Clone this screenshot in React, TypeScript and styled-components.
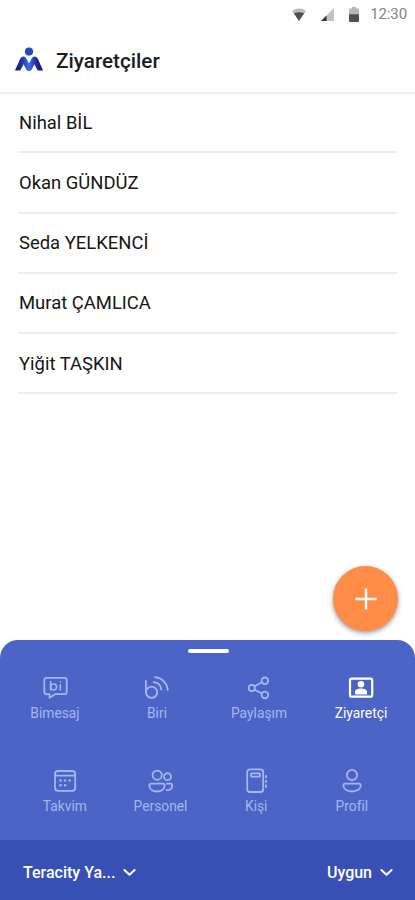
import React from "react";
import styled, { createGlobalStyle } from "styled-components";

const GlobalStyle = createGlobalStyle`
  *, *::before, *::after { box-sizing: border-box; }
  body { margin: 0; background: #fff; font-family: Roboto, "Liberation Sans", sans-serif; }
`;

const Screen = styled.div`
  display: flex;
  flex-direction: column;
  width: 415px;
  height: 900px;
  overflow: hidden;
  background: #fff;
`;

const StatusBar = styled.div`
  display: flex;
  flex: none;
  align-items: center;
  justify-content: flex-end;
  height: 28px;
  padding-right: 8px;
  color: #858585;
  font-size: 15px;
  letter-spacing: -0.1px;
  svg { display: block; flex: none; }
`;

const Clock = styled.span`
  margin-left: 11px;
  line-height: 28px;
`;

const StatusIcons = styled.div`
  display: flex;
  align-items: center;
  gap: 15px;
`;

const Header = styled.header`
  display: flex;
  flex: none;
  align-items: center;
  gap: 13px;
  height: 66px;
  padding-left: 15px;
  border-bottom: 2px solid #efefef;
  svg { display: block; flex: none; }
`;

const Title = styled.h1`
  margin: 2px 0 0;
  color: #1c1c1e;
  font-size: 20.7px;
  font-weight: 500;
  line-height: 24px;
`;

const List = styled.ul`
  flex: 1;
  margin: 0;
  padding: 0 18px;
  list-style: none;
`;

const Visitor = styled.li`
  display: flex;
  align-items: center;
  height: 60.2px;
  padding: 1px 0 0 1px;
  border-bottom: 2px solid #ededed;
  color: #161616;
  font-size: 18.45px;
  &:first-child { height: 59.4px; padding-top: 0; }
`;

const AddButton = styled.button`
  position: absolute;
  top: -74px;
  right: 17px;
  display: flex;
  align-items: center;
  justify-content: center;
  width: 65px;
  height: 65px;
  padding: 0;
  border: 0;
  border-radius: 50%;
  background: #ff8c47;
  box-shadow: 0 2px 5px rgba(0, 0, 0, 0.42);
`;

const Panel = styled.section`
  position: relative;
  display: flex;
  flex: none;
  flex-direction: column;
  height: 260px;
  border-radius: 18px 18px 0 0;
  background: #4c64c5;
`;

const Handle = styled.div`
  flex: none;
  width: 41px;
  height: 4px;
  margin: 9px auto 0 188px;
  border-radius: 2px;
  background: #fff;
`;

const NavRow = styled.nav<{ $columns: string; $left: number; $top: number }>`
  display: grid;
  grid-template-columns: ${(p) => p.$columns};
  margin-top: ${(p) => p.$top}px;
  padding-left: ${(p) => p.$left}px;
`;

const NavItem = styled.div<{ $active?: boolean }>`
  display: flex;
  flex-direction: column;
  align-items: center;
  height: 52px;
  color: ${(p) => (p.$active ? "#fff" : "#a5b6f0")};
  svg { display: block; flex: none; }
`;

const NavLabel = styled.span`
  margin-top: 2px;
  font-size: 13.8px;
  line-height: 18px;
  white-space: nowrap;
`;

const Footer = styled.footer`
  display: flex;
  align-items: center;
  justify-content: space-between;
  height: 60px;
  margin-top: auto;
  padding: 4px 22px 0 23px;
  background: #3850b5;
`;

const Picker = styled.div`
  display: flex;
  align-items: center;
  gap: 8px;
  color: #fff;
  font-size: 16px;
  font-weight: 500;
  svg { display: block; }
`;

const Svg = ({ children }: { children: React.ReactNode }) => (
  <svg width="28" height="28" viewBox="0 0 28 28" fill="none" stroke="currentColor" strokeWidth="1.8" strokeLinecap="round" strokeLinejoin="round">
    {children}
  </svg>
);

const MessageIcon = () => (
  <Svg>
    <path d="M5.5 3.8h18a2.2 2.2 0 0 1 2.2 2.2v12a2.2 2.2 0 0 1-2.2 2.2H14L8.6 23.8v-3.6H5.5A2.2 2.2 0 0 1 3.3 18V6a2.2 2.2 0 0 1 2.2-2.2z" />
    <path d="M9.6 7.5v8.3M19.3 10.8v5.2M19.3 7.7v.2" strokeWidth="1.6" />
    <circle cx="12.6" cy="13" r="3" strokeWidth="1.6" />
  </Svg>
);

const SignalIcon = () => (
  <Svg>
    <path d="M2.9 7v11.2M10.7 8.1c4.2.4 7.2 3.4 7.6 7.4M12.2 3.2c7 .9 11.9 6 12.6 12.8" />
    <circle cx="8.6" cy="18.3" r="5.6" />
  </Svg>
);

const ShareIcon = () => (
  <Svg>
    <path d="m9.6 12.2 7.4-4M9.6 15.7l7.4 3.8" />
    <circle cx="6.8" cy="14" r="3.1" />
    <circle cx="19.9" cy="6.8" r="3.3" />
    <circle cx="19.9" cy="21" r="3.3" />
  </Svg>
);

const VisitorIcon = () => (
  <Svg>
    <rect x="3" y="4.7" width="22.2" height="18" rx="1.8" strokeWidth="2.2" />
    <circle cx="14" cy="10.3" r="3.3" fill="currentColor" stroke="none" />
    <path d="M8 20.6v-2.8c0-2.3 2.9-3.4 6-3.4s6 1.1 6 3.4v2.8z" fill="currentColor" stroke="none" />
  </Svg>
);

const CalendarIcon = () => (
  <Svg>
    <rect x="4" y="4" width="20.2" height="19.8" rx="3" />
    <path d="M4.2 8.6h19.6" />
    <path d="M9.5 13.5h.1M14 13.5h.1M18.6 13.5h.1M9.5 18.3h.1M14 18.3h.1" strokeWidth="2.6" />
  </Svg>
);

const PeopleIcon = () => (
  <Svg>
    <circle cx="10.2" cy="8.2" r="4.6" />
    <circle cx="20.5" cy="9.7" r="3.5" />
    <path d="M4.2 16.7h11.6c1.1 0 1.8.7 1.8 1.8 0 3.8-3.2 6-7.5 6s-7.7-2.2-7.7-6c0-1.1.7-1.8 1.8-1.8zM19.8 16.7h3.7c1 0 1.7.7 1.7 1.7 0 3.1-2.2 4.8-5.7 4.8" />
  </Svg>
);

const ContactIcon = () => (
  <Svg>
    <rect x="5.2" y="2.4" width="16" height="22.6" rx="2.7" />
    <rect x="9" y="6.3" width="9" height="3.3" rx=".6" />
    <path d="M24 9v1.3M24 13.8v1.3M24 18.6v1.3" strokeWidth="2" />
  </Svg>
);

const ProfileIcon = () => (
  <Svg>
    <circle cx="14" cy="8" r="5.2" />
    <path d="M7.2 16.6h13.7c1.1 0 1.8.7 1.8 1.8 0 3.7-3.8 6.1-8.7 6.1s-8.6-2.4-8.6-6.1c0-1.1.7-1.8 1.8-1.8z" />
  </Svg>
);

const Chevron = () => (
  <svg width="13" height="9" viewBox="0 0 13 9" fill="none" stroke="currentColor" strokeWidth="2" strokeLinecap="round" strokeLinejoin="round">
    <path d="m1.4 2 5.1 4.8L11.6 2" />
  </svg>
);

const Logo = () => (
  <svg width="28" height="26" viewBox="0 0 28 26">
    <defs>
      <linearGradient id="logo" x1="0" x2="1">
        <stop offset="0" stopColor="#11116f" />
        <stop offset=".22" stopColor="#2033a8" />
        <stop offset=".5" stopColor="#416de0" />
        <stop offset=".76" stopColor="#202ba1" />
        <stop offset="1" stopColor="#11116f" />
      </linearGradient>
    </defs>
    <circle cx="14" cy="4.6" r="4.1" fill="#2548be" />
    <path d="M0 23.6 5.1 12.1Q6 9.4 8.2 9.4q2.4 0 3.3 2.4L14 16.6l2.5-4.8q1.1-2.4 3.3-2.4t3.2 2.7L28 23.6h-5.3l-3.3-6.4-2.8 5.6q-.8 1.4-2.6 1.4t-2.6-1.4l-2.8-5.6-3.3 6.4z" fill="url(#logo)" />
  </svg>
);

const WifiIcon = () => (
  <svg width="14" height="13" viewBox="0 0 14 13">
    <path d="M0 2.9Q7-2 14 2.9L7 13z" fill="#bbb" />
    <path d="M1.9 5.3Q7 3 12.1 5.3L7 13z" fill="#505050" />
  </svg>
);

const CellIcon = () => (
  <svg width="13" height="13" viewBox="0 0 14 14">
    <path d="M0 14 14 0v14z" fill="#c2c2c2" />
    <path d="M0 14 6 8v6z" fill="#333" />
  </svg>
);

const BatteryIcon = () => (
  <svg width="10" height="15" viewBox="0 0 10 15">
    <path d="M3 0h4v1.5h3V8H0V1.5h3z" fill="#b7b7b7" />
    <path d="M0 7.3h10V14a1 1 0 0 1-1 1H1a1 1 0 0 1-1-1z" fill="#505050" />
  </svg>
);

const visitors = ["Nihal BİL", "Okan GÜNDÜZ", "Seda YELKENCİ", "Murat ÇAMLICA", "Yiğit TAŞKIN"];

export default function App() {
  return (
    <Screen lang="tr">
      <GlobalStyle />
      <StatusBar>
        <StatusIcons>
          <WifiIcon />
          <CellIcon />
          <BatteryIcon />
        </StatusIcons>
        <Clock>12:30</Clock>
      </StatusBar>
      <Header>
        <Logo />
        <Title>Ziyaretçiler</Title>
      </Header>
      <List>
        {visitors.map((name) => (
          <Visitor key={name}>{name}</Visitor>
        ))}
      </List>
      <Panel>
        <AddButton aria-label="Ekle">
          <svg width="22" height="22" viewBox="0 0 22 22" stroke="#fff" strokeWidth="2.4">
            <path d="M11 .5v21M.5 11h21" />
          </svg>
        </AddButton>
        <Handle />
        <NavRow $columns="repeat(4, 102px)" $left={4} $top={21}>
          <NavItem><MessageIcon /><NavLabel>Bimesaj</NavLabel></NavItem>
          <NavItem><SignalIcon /><NavLabel>Biri</NavLabel></NavItem>
          <NavItem><ShareIcon /><NavLabel>Paylaşım</NavLabel></NavItem>
          <NavItem $active><VisitorIcon /><NavLabel>Ziyaretçi</NavLabel></NavItem>
        </NavRow>
        <NavRow $columns="repeat(4, 95.7px)" $left={17} $top={41}>
          <NavItem><CalendarIcon /><NavLabel>Takvim</NavLabel></NavItem>
          <NavItem><PeopleIcon /><NavLabel>Personel</NavLabel></NavItem>
          <NavItem><ContactIcon /><NavLabel>Kişi</NavLabel></NavItem>
          <NavItem><ProfileIcon /><NavLabel>Profil</NavLabel></NavItem>
        </NavRow>
        <Footer>
          <Picker>Teracity Ya...<Chevron /></Picker>
          <Picker>Uygun<Chevron /></Picker>
        </Footer>
      </Panel>
    </Screen>
  );
}
